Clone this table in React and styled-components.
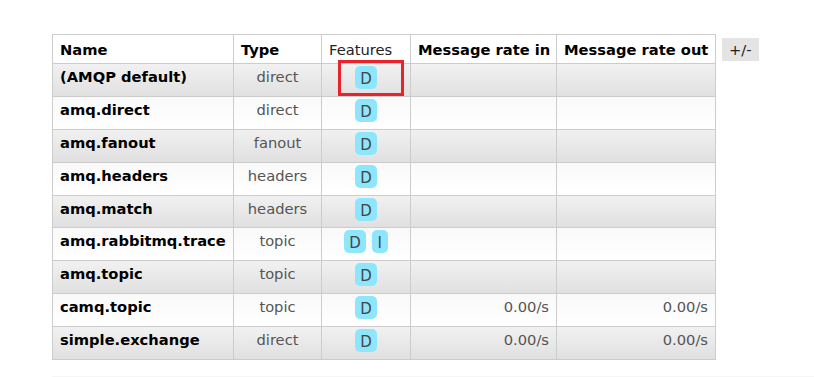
import React from 'react'
import styled, { createGlobalStyle } from 'styled-components'

const Global = createGlobalStyle`
body{
    margin: 0;
    background: #fff;
    font-family: 'DejaVu Sans', Verdana, sans-serif;
    font-size: 14.7px;
    color: #000;
}
`

const Page = styled.div`
padding: 34px 0 0 52px;
`
const Section = styled.div`
display: flex;
align-items: flex-start;
`
const Table = styled.table`
width: 663px;
border-collapse: collapse;
table-layout: fixed;
border: 1px solid #ccc;
`
const Head = styled.th`
box-sizing: border-box;
width: ${p => p.w}px;
height: 29px;
padding: 0 7px;
text-align: left;
vertical-align: middle;
font-weight: ${p => (p.plain ? 'normal' : 'bold')};
color: ${p => (p.plain ? '#222' : '#000')};
border: 1px solid #ccc;
background: #fff;
white-space: nowrap;
`
const Row = styled.tr`
height: 32.9px;
background: ${p => (p.alt
    ? 'linear-gradient(#f1f1f1, #e0e0e0)'
    : 'linear-gradient(#f9f9f9, #fff)')};
`
const Cell = styled.td`
border: 1px solid #ccc;
padding: ${p => (p.tight ? '2px' : '4px')} 7px 0;
vertical-align: top;
line-height: 18px;
white-space: nowrap;
text-align: ${p => p.align || 'left'};
color: #555;
position: relative;
`
const Name = styled(Cell)`
font-weight: bold;
color: #000;
`
const Badges = styled.div`
display: flex;
justify-content: center;
gap: 6px;
`
const Badge = styled.abbr`
display: inline-block;
box-sizing: border-box;
min-width: 16px;
height: 23px;
padding: 5px 5px 0;
line-height: 17px;
font-size: 15px;
text-align: center;
border-radius: 5px;
background: #8ee6fd;
color: #444;
text-decoration: none;
`
const Marker = styled.div`
position: absolute;
left: 16px;
top: -4px;
width: 66px;
height: 36px;
box-sizing: border-box;
border: 3px solid #e8232b;
`
const Toggle = styled.span`
margin: 4px 0 0 6px;
padding: 2px 7px;
line-height: 19px;
background: #e4e4e4;
color: #222;
`
const Footer = styled.div`
margin-top: 16px;
height: 10px;
background: #f6f6f6;
`

const exchanges = [
    { name: '(AMQP default)', type: 'direct', features: ['D'], marked: true },
    { name: 'amq.direct', type: 'direct', features: ['D'] },
    { name: 'amq.fanout', type: 'fanout', features: ['D'] },
    { name: 'amq.headers', type: 'headers', features: ['D'] },
    { name: 'amq.match', type: 'headers', features: ['D'] },
    { name: 'amq.rabbitmq.trace', type: 'topic', features: ['D', 'I'] },
    { name: 'amq.topic', type: 'topic', features: ['D'] },
    { name: 'camq.topic', type: 'topic', features: ['D'], rateIn: '0.00/s', rateOut: '0.00/s' },
    { name: 'simple.exchange', type: 'direct', features: ['D'], rateIn: '0.00/s', rateOut: '0.00/s' },
]

const App = () => {
    return (
        <Page>
            <Global />
            <Section>
                <Table>
                    <thead>
                        <tr>
                            <Head w={181}>Name</Head>
                            <Head w={88}>Type</Head>
                            <Head w={89} plain>Features</Head>
                            <Head w={146}>Message rate in</Head>
                            <Head w={159}>Message rate out</Head>
                        </tr>
                    </thead>
                    <tbody>
                        {exchanges.map((x, i) => (
                            <Row key={x.name} alt={i % 2 === 0}>
                                <Name>{x.name}</Name>
                                <Cell align="center">{x.type}</Cell>
                                <Cell tight>
                                    <Badges>
                                        {x.features.map(f => <Badge key={f}>{f}</Badge>)}
                                    </Badges>
                                    {x.marked && <Marker />}
                                </Cell>
                                <Cell align="right">{x.rateIn}</Cell>
                                <Cell align="right">{x.rateOut}</Cell>
                            </Row>
                        ))}
                    </tbody>
                </Table>
                <Toggle>+/-</Toggle>
            </Section>
            <Footer />
        </Page>
    )
}

export default App
